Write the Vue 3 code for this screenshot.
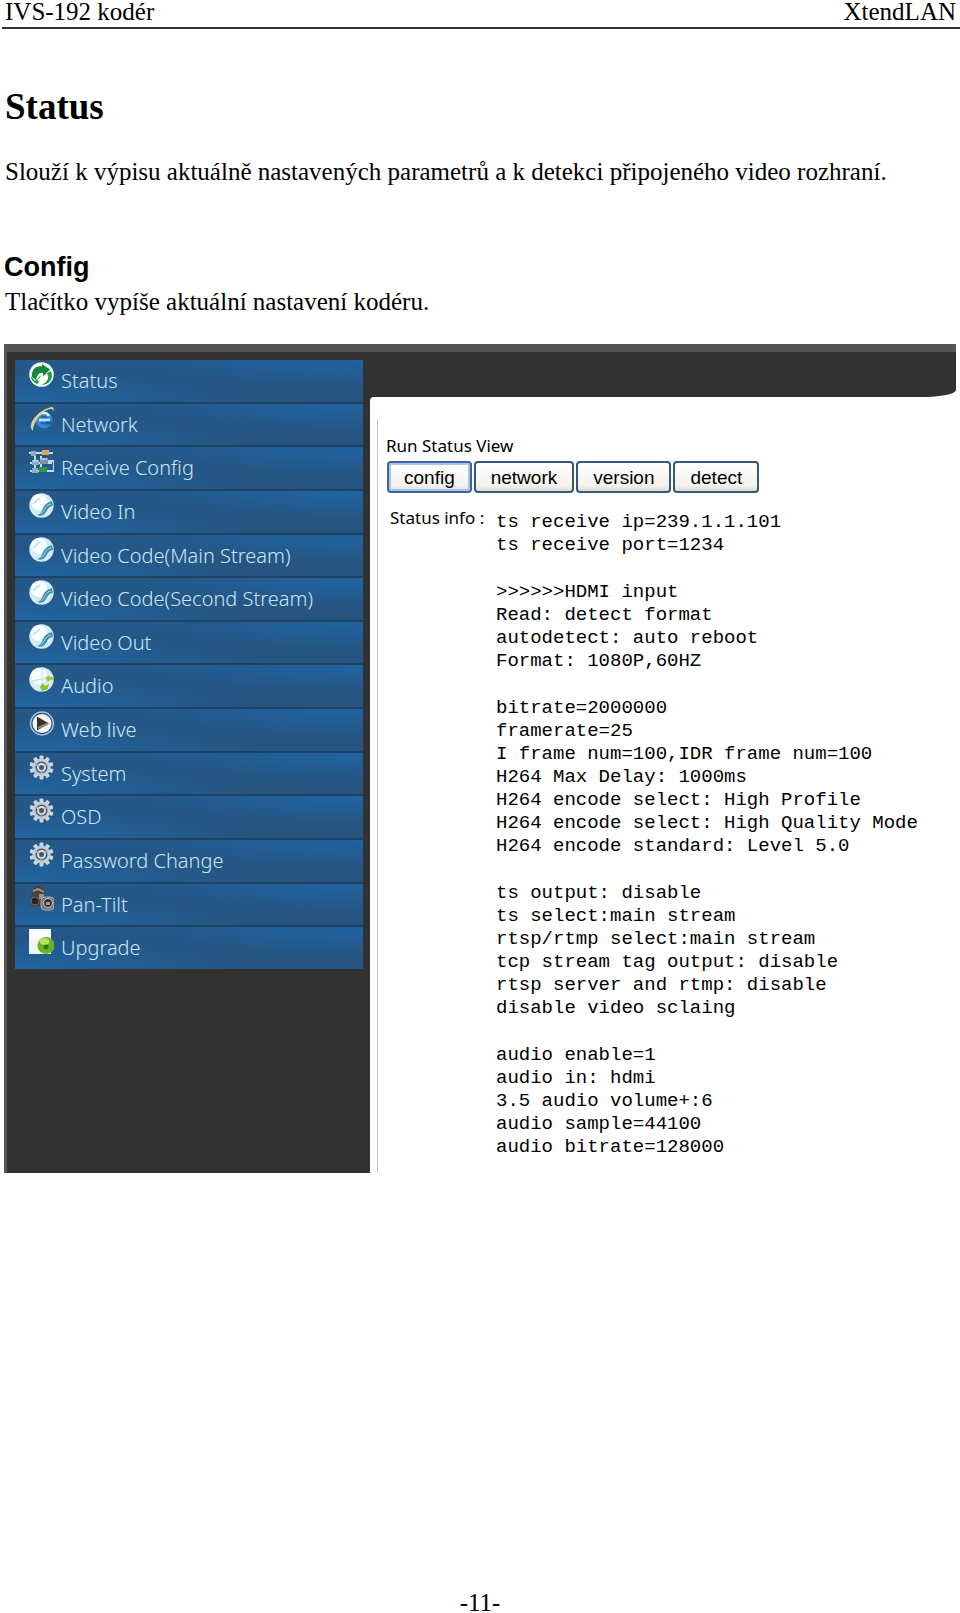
<script setup>
const items = [
  { label: 'Status', icon: 'refresh' },
  { label: 'Network', icon: 'browser' },
  { label: 'Receive Config', icon: 'nodes' },
  { label: 'Video In', icon: 'video' },
  { label: 'Video Code(Main Stream)', icon: 'video' },
  { label: 'Video Code(Second Stream)', icon: 'video' },
  { label: 'Video Out', icon: 'video' },
  { label: 'Audio', icon: 'audio' },
  { label: 'Web live', icon: 'play' },
  { label: 'System', icon: 'gear' },
  { label: 'OSD', icon: 'gear' },
  { label: 'Password Change', icon: 'gear' },
  { label: 'Pan-Tilt', icon: 'camera' },
  { label: 'Upgrade', icon: 'upgrade' },
]

const views = ['config', 'network', 'version', 'detect']

const log = [
  ['ts receive ip=239.1.1.101', 'ts receive port=1234'],
  ['>>>>>>HDMI input', 'Read: detect format', 'autodetect: auto reboot', 'Format: 1080P,60HZ'],
  [
    'bitrate=2000000',
    'framerate=25',
    'I frame num=100,IDR frame num=100',
    'H264 Max Delay: 1000ms',
    'H264 encode select: High Profile',
    'H264 encode select: High Quality Mode',
    'H264 encode standard: Level 5.0',
  ],
  [
    'ts output: disable',
    'ts select:main stream',
    'rtsp/rtmp select:main stream',
    'tcp stream tag output: disable',
    'rtsp server and rtmp: disable',
    'disable video sclaing',
  ],
  ['audio enable=1', 'audio in: hdmi', '3.5 audio volume+:6', 'audio sample=44100', 'audio bitrate=128000'],
]

const teeth = [0, 36, 72, 108, 144, 180, 216, 252, 288, 324]
</script>

<template>
  <div class="page">
    <header class="page-head">
      <span>IVS-192 kodér</span>
      <span>XtendLAN</span>
    </header>

    <main class="doc">
      <h1>Status</h1>
      <p class="intro">Slouží k výpisu aktuálně nastavených parametrů a k detekci připojeného video rozhraní.</p>
      <h2>Config</h2>
      <p class="note">Tlačítko vypíše aktuální nastavení kodéru.</p>

      <section class="device">
        <nav class="side">
          <ul class="menu">
            <li v-for="item in items" :key="item.label">
              <a href="#">
                <svg class="icon" viewBox="0 0 25 25" aria-hidden="true">
                  <g v-if="item.icon === 'refresh'">
                    <circle cx="12.5" cy="12.5" r="12.3" fill="#f4fbf5" />
                    <path d="M22 9c3 8-2 14-10 14 6-2 8-7 6-12z" fill="#239a49" />
                    <path d="M2 14l4 5 6-6-3 9c-4-1-7-4-7-8z" fill="#239a49" />
                    <path d="M3 15C2 8 7 3 13 4.500V2l8 5.500-7 7V11c-4-1-6 2-7 7z" fill="#14883a" />
                    <path d="M8 18l6-5v3c3 0 4-1 5-4 1 5-1 8-5 8v3z" fill="#fff" />
                  </g>
                  <g v-else-if="item.icon === 'browser'">
                    <circle cx="15" cy="14" r="6.5" fill="#2166ae" stroke="#3088d8" stroke-width="4" />
                    <path d="M10 14h11" stroke="#b9e0fa" stroke-width="3" />
                    <path d="M17 17h6" stroke="#235d98" stroke-width="3" />
                    <path d="M10 9c2-3 8-3 10 1" fill="none" stroke="#d5efff" stroke-width="2.5" />
                    <path d="M4 25C-3 20 8 4 23 1c2 0 2 2 1 5 0-3-1-3-3-3C12 5 4 17 4 25z" fill="#ddd38b" />
                  </g>
                  <g v-else-if="item.icon === 'nodes'">
                    <path d="M0 4h24M6 4v19M12 7v13M1 14h22M1 22h11M19 12h6v10H10" fill="none" stroke="#c5d8e4" stroke-width="2" />
                    <path d="M2 2h5v5H2zM3 11h7v5H3zM3 19h6v5H3z" fill="#8fabc2" />
                    <path d="M13 1h7v5h-7z" fill="#e2a15b" />
                    <path d="M11 9h8v6h-8z" fill="#8293ad" />
                    <path d="M10 18h8v5h-8z" fill="#2f9846" />
                    <path d="M11 10h7M4 12h5" stroke="#dfe9ef" />
                  </g>
                  <g v-else-if="item.icon === 'video'">
                    <circle cx="12.5" cy="12.5" r="12.2" fill="#d5eaf4" />
                    <circle cx="10" cy="9" r="8" fill="#f8fdff" />
                    <path d="M8 22c4-1 5-4 6-7 2-4 5-6 9-7l1 5c-4 0-5 3-7 6-2 3-5 5-9 3z" fill="#3a91b3" />
                    <path d="M12 21c4-3 4-9 10-10" fill="none" stroke="#a8d5e2" />
                    <path d="M4 11l7-6" stroke="#c8e5ed" stroke-width="2" />
                  </g>
                  <g v-else-if="item.icon === 'audio'">
                    <circle cx="12.5" cy="12.5" r="12.2" fill="#dcebed" />
                    <circle cx="10" cy="9" r="8" fill="#f9fdfd" />
                    <path d="M13 2v21M3 14l20-4" stroke="#c3dcd7" />
                    <path d="M16 11l4-3 1 2h5v3h-5l-2 2z" fill="#9bcc48" />
                    <path d="M11 20l3-4 2 3 4-2-1 5-6 2z" fill="#8bc52b" />
                  </g>
                  <g v-else-if="item.icon === 'play'">
                    <circle cx="13" cy="12.5" r="11.4" fill="#245681" stroke="#a5c8dd" stroke-width="1.5" />
                    <circle cx="13" cy="12.5" r="9.5" fill="#f4f3ee" />
                    <path d="M8 5.5l12 7-12 7z" fill="#38342f" />
                    <path d="M9 17l10-4.5" stroke="#8c8782" stroke-width="2" />
                  </g>
                  <g v-else-if="item.icon === 'gear'">
                    <rect
                      v-for="angle in teeth"
                      :key="angle"
                      x="10.5"
                      y="0.5"
                      width="4"
                      height="5"
                      rx="1"
                      fill="#cbd5de"
                      :transform="`rotate(${angle} 12.5 12.5)`"
                    />
                    <circle cx="12.5" cy="12.5" r="7.5" fill="#4a5968" stroke="#c3cdd6" stroke-width="3" />
                    <circle cx="12.5" cy="12.5" r="3.5" fill="#3d566f" stroke="#dce2e6" stroke-width="2" />
                    <path d="M12.5 15v5M15 11l4-2M10 11L6 9" stroke="#a9b5bf" stroke-width="1.5" />
                  </g>
                  <g v-else-if="item.icon === 'camera'">
                    <path d="M2 9l2-7 5-2 6 2 1 8 1 10H2z" fill="#484340" />
                    <path d="M4 5l5-2 6 3" fill="none" stroke="#9d8b7c" stroke-width="2" />
                    <path d="M10 8h5v5h-5z" fill="#a39285" />
                    <circle cx="6" cy="15" r="4" fill="#252422" stroke="#6f6863" />
                    <rect x="12" y="11" width="13" height="13" rx="4" fill="#77777a" stroke="#adafb5" />
                    <circle cx="19" cy="17" r="4.5" fill="#303238" stroke="#c9cbd0" />
                    <path d="M17 16h4v3h-4z" fill="#96989e" />
                  </g>
                  <g v-else>
                    <path d="M0 0h22v25H0z" fill="#f3f5f3" />
                    <path d="M1 1h20v8H1z" fill="#fff" />
                    <circle cx="17" cy="16.5" r="8.5" fill="#68b421" />
                    <ellipse cx="15.5" cy="12.5" rx="5" ry="3.5" fill="#b3e35f" />
                    <circle cx="17" cy="18" r="2.5" fill="#2f7812" />
                  </g>
                </svg>
                <span class="label">{{ item.label }}</span>
              </a>
            </li>
          </ul>
        </nav>

        <div class="content">
          <div class="bar-wrap"><div class="bar"></div></div>
          <div class="sheet">
            <div class="view">
              <h3>Run Status View</h3>
              <div class="buttons">
                <button v-for="(view, i) in views" :key="view" type="button" :class="{ active: i === 0 }">{{ view }}</button>
              </div>
              <div class="info">
                <span class="info-label">Status info :</span>
                <div class="log">
                  <p v-for="(group, i) in log" :key="i">{{ group.join('\n') }}</p>
                </div>
              </div>
            </div>
          </div>
        </div>
      </section>
    </main>

    <footer class="page-foot">-11-</footer>
  </div>
</template>

<style>
body {
  background: #fff;
}
</style>

<style scoped>
.page {
  box-sizing: border-box;
  min-height: 100vh;
  display: flex;
  flex-direction: column;
  color: #000;
  font: 25px/28px "Liberation Serif", serif;
}
.page-head {
  display: flex;
  justify-content: space-between;
  margin-left: 2px;
  padding: 0 4px 3px 3px;
  border-bottom: 2px solid #333;
  line-height: 24px;
}
.doc {
  flex: 1;
  padding: 0 4px;
}
h1,
h2,
h3,
p,
ul {
  margin: 0;
  padding: 0;
}
h1 {
  margin: 58px 1px 31px;
  font-size: 37px;
  line-height: 40px;
}
.intro,
.note {
  margin-left: 1px;
}
h2 {
  margin: 65px 0 5px;
  font: bold 27px/32px "Liberation Sans", sans-serif;
}
.device {
  display: flex;
  margin-top: 28px;
  border-top: 8px solid #555;
  background: #323232;
  font-family: "Noto Sans", sans-serif;
}
.side {
  flex: 0 0 366px;
  box-sizing: border-box;
  padding: 8px 7px 0 8px;
  border-left: 3px solid #555;
}
.menu {
  display: flex;
  flex-direction: column;
  height: 609px;
  list-style: none;
}
.menu li {
  flex: 1;
  box-sizing: border-box;
  border-bottom: 2px solid #1f4263;
  background:
    radial-gradient(ellipse at 100% 0, rgba(30, 104, 172, 0.7), transparent 45%),
    radial-gradient(ellipse at 0 100%, rgba(30, 110, 180, 0.7), transparent 50%),
    linear-gradient(#24598b, #27547f);
}
.menu li:last-child {
  border-bottom: 0;
}
.menu a {
  display: flex;
  align-items: flex-start;
  gap: 7px;
  padding: 2px 8px 0 14px;
  color: #c9e6f8;
  font-size: 20px;
  font-weight: 300;
  line-height: 28px;
  text-decoration: none;
  white-space: nowrap;
}
.icon {
  flex: none;
  width: 25px;
  height: 25px;
}
.label {
  padding-top: 5px;
}
.content {
  flex: 1;
  min-width: 0;
  display: flex;
  flex-direction: column;
}
.bar-wrap {
  background: #fff;
}
.bar {
  height: 45px;
  border-bottom-right-radius: 34px 7px;
  background: #323232;
}
.sheet {
  flex: 1;
  padding: 22px 0 0 7px;
  border-top-left-radius: 4px;
  background: #fff;
}
.view {
  padding: 14px 0 14px 8px;
  border-left: 1px solid #c4c4c8;
}
h3 {
  font-size: 17px;
  font-weight: 400;
  line-height: 26px;
}
.buttons {
  display: flex;
  gap: 2px;
  margin: 2px 0 0 1px;
}
button {
  box-sizing: border-box;
  height: 32px;
  padding: 1px 15px 0;
  border: 2px solid #35597a;
  border-radius: 4px;
  background: linear-gradient(#fff, #f3f2ed 80%, #dedbd3);
  color: #000;
  font: 19px/26px "Liberation Sans", sans-serif;
}
button.active {
  border-color: #3c64a0;
  box-shadow: inset 0 0 0 2px #a9c5ef;
}
.info {
  display: flex;
  align-items: flex-start;
  margin: 13px 0 0 4px;
}
.info-label {
  flex: 0 0 106px;
  font-size: 17px;
  line-height: 24px;
}
.log {
  display: flex;
  flex-direction: column;
  gap: 24px;
  padding-top: 5px;
  font: 19px/23px "Liberation Mono", monospace;
}
.log p {
  white-space: pre;
}
.page-foot {
  line-height: 20px;
  text-align: center;
}
</style>
